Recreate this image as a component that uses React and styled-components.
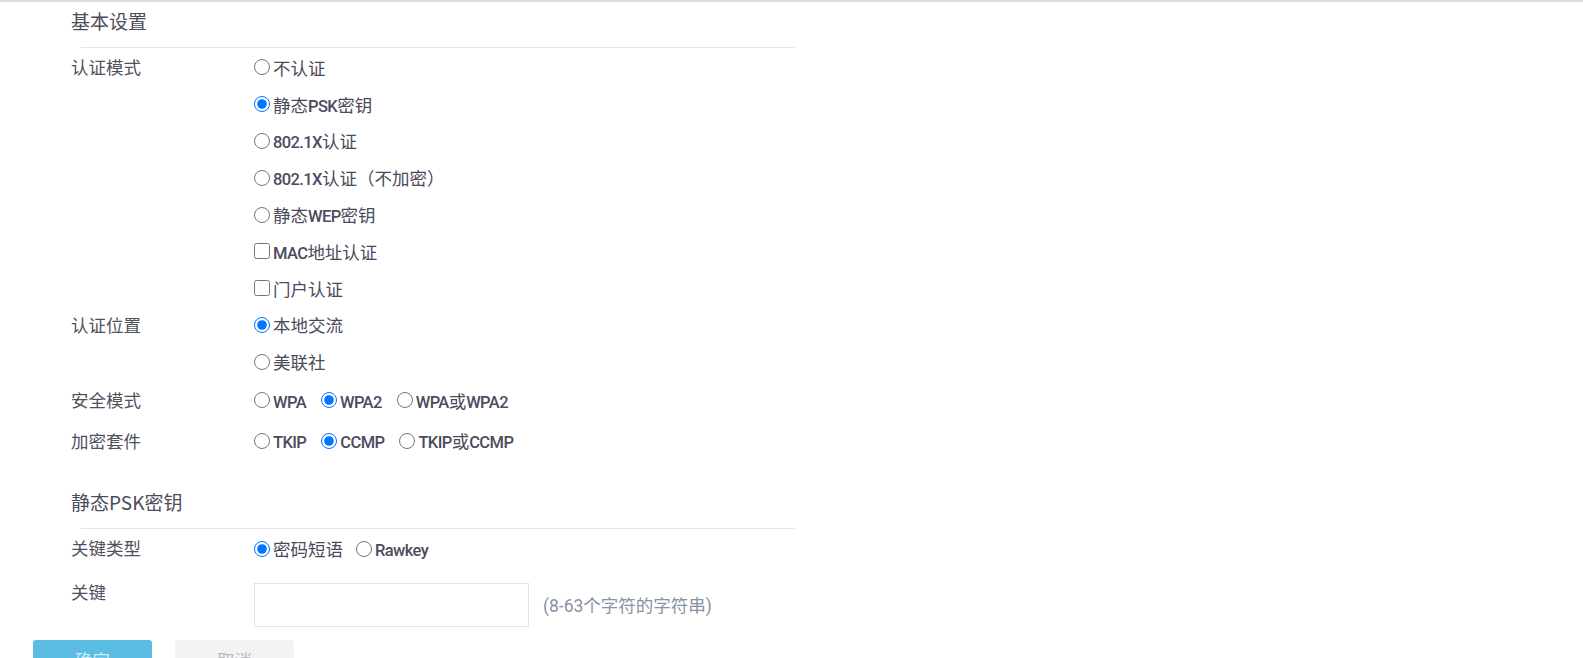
import React from "react";
import styled, { createGlobalStyle } from "styled-components";

const Global = createGlobalStyle`
  html, body { margin: 0; padding: 0; background: #fff; }
  body { font-family: "Noto Sans CJK SC", "Noto Sans", sans-serif; }
`;

const Page = styled.div`
  border-top: 2px solid #dcdcdc;
  width: 1583px;
  min-height: 656px;
  overflow: hidden;
  box-sizing: border-box;
`;

const Section = styled.section`
  margin-top: ${(p) => p.$top || 0}px;
`;

const SectionTitle = styled.div`
  padding-left: 71px;
  height: 34px;
  line-height: 34px;
  font-size: 19px;
  color: #4c4c5c;
`;

const Divider = styled.div`
  margin-left: 81px;
  width: 714px;
  height: 1px;
  background: #e6e6e6;
  margin-top: 9px;
`;

const Body = styled.div`
  padding-top: 1px;
`;

const Row = styled.div`
  display: grid;
  grid-template-columns: 183px 1fr;
  padding-left: 71px;
  min-height: ${(p) => p.$h || 36.8}px;
  align-items: start;
`;

const Label = styled.div`
  font-size: 17.5px;
  color: #50505f;
  line-height: ${(p) => p.$lh || 36.8}px;
`;

const Stack = styled.div`
  display: flex;
  flex-direction: column;
`;

const Inline = styled.div`
  display: flex;
  align-items: center;
  gap: ${(p) => p.$gap || 15}px;
  height: ${(p) => p.$h || 36.8}px;
`;

const Option = styled.label`
  display: flex;
  align-items: center;
  gap: 3px;
  height: ${(p) => (p.$inline ? "auto" : "36.8px")};
  font-family: "Noto Sans CJK SC", sans-serif;
  font-size: 17.5px;
  color: #4a4a5c;
  cursor: pointer;
`;

const Latin = styled.span`
  font-family: "Roboto", "Noto Sans", sans-serif;
  font-weight: 500;
  font-size: 16.5px;
  letter-spacing: -0.6px;
  color: #4c4c5e;
`;

const Radio = styled.input.attrs({ type: "radio" })`
  width: 16px;
  height: 16px;
  margin: 0;
  accent-color: #0075ff;
`;

const Check = styled.input.attrs({ type: "checkbox" })`
  width: 16px;
  height: 16px;
  margin: 0;
`;

const KeyRow = styled.div`
  display: grid;
  grid-template-columns: 183px auto auto;
  justify-content: start;
  padding-left: 71px;
  margin-top: 7px;
`;

const KeyField = styled.div`
  display: flex;
  align-items: center;
  gap: 14px;
  margin-top: 9px;
`;

const Input = styled.input`
  width: 275px;
  height: 44px;
  box-sizing: border-box;
  border: 1px solid #e3e3e3;
  outline: none;
  padding: 0 10px;
  font-size: 16px;
`;

const Hint = styled.span`
  font-family: "Roboto", "Noto Sans CJK SC", sans-serif;
  font-size: 17.5px;
  color: #8893a4;
`;

const Buttons = styled.div`
  display: flex;
  gap: 23px;
  padding-left: 33px;
  margin-top: 13px;
`;

const Button = styled.button`
  width: 119px;
  height: 40px;
  border: none;
  border-radius: 3px;
  font-family: inherit;
  font-size: 17.5px;
  background: ${(p) => (p.$primary ? "#5bbce4" : "#f3f3f3")};
  color: ${(p) => (p.$primary ? "#d4ecf8" : "#b9bcc4")};
`;

function Mixed({ text }) {
  const parts = text.split(/([A-Za-z0-9.]+)/).filter(Boolean);
  return parts.map((p, i) =>
    /^[A-Za-z0-9.]+$/.test(p) ? <Latin key={i}>{p}</Latin> : <span key={i}>{p}</span>
  );
}

function Opt({ name, label, checked, inline, box }) {
  return (
    <Option $inline={inline}>
      {box ? (
        <Check defaultChecked={checked} />
      ) : (
        <Radio name={name} defaultChecked={checked} />
      )}
      <span>
        <Mixed text={label} />
      </span>
    </Option>
  );
}

export default function App() {
  return (
    <>
      <Global />
      <Page>
        <Section $top={2}>
          <SectionTitle>基本设置</SectionTitle>
          <Divider />
          <Body>
            <Row>
              <Label>认证模式</Label>
              <Stack>
                <Opt name="auth" label="不认证" />
                <Opt name="auth" label="静态PSK密钥" checked />
                <Opt name="auth" label="802.1X认证" />
                <Opt name="auth" label="802.1X认证（不加密）" />
                <Opt name="auth" label="静态WEP密钥" />
                <Opt box label="MAC地址认证" />
                <Opt box label="门户认证" />
              </Stack>
            </Row>
            <Row>
              <Label>认证位置</Label>
              <Stack>
                <Opt name="loc" label="本地交流" checked />
                <Opt name="loc" label="美联社" />
              </Stack>
            </Row>
            <Row>
              <Label $lh={40.5}>安全模式</Label>
              <Inline $h={40.5}>
                <Opt inline name="sec" label="WPA" />
                <Opt inline name="sec" label="WPA2" checked />
                <Opt inline name="sec" label="WPA或WPA2" />
              </Inline>
            </Row>
            <Row>
              <Label $lh={40.5}>加密套件</Label>
              <Inline $h={40.5}>
                <Opt inline name="enc" label="TKIP" />
                <Opt inline name="enc" label="CCMP" checked />
                <Opt inline name="enc" label="TKIP或CCMP" />
              </Inline>
            </Row>
          </Body>
        </Section>
        <Section $top={24}>
          <SectionTitle>静态PSK密钥</SectionTitle>
          <Divider />
          <Body>
            <Row>
              <Label>关键类型</Label>
              <Inline $gap={13}>
                <Opt inline name="kt" label="密码短语" checked />
                <Opt inline name="kt" label="Rawkey" />
              </Inline>
            </Row>
            <KeyRow>
              <Label>关键</Label>
              <KeyField>
                <Input />
                <Hint>(8-63个字符的字符串)</Hint>
              </KeyField>
            </KeyRow>
          </Body>
        </Section>
        <Buttons>
          <Button $primary>确定</Button>
          <Button>取消</Button>
        </Buttons>
      </Page>
    </>
  );
}
